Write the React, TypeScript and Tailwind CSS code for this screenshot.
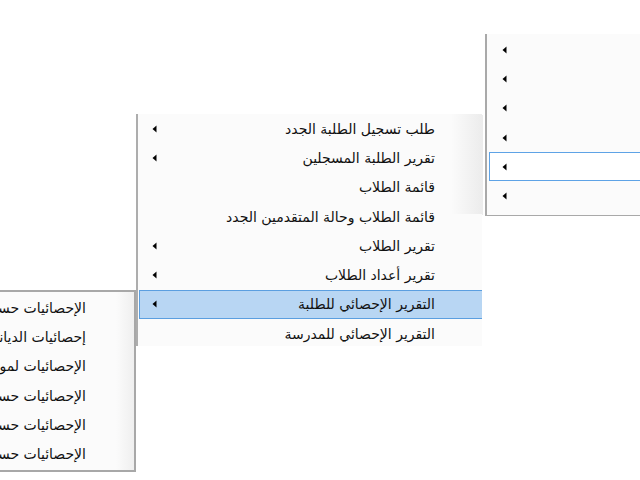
import React from 'react';

type Item = { label: string; sub?: boolean; active?: boolean };

const Arrow = () => (
  <svg width="5" height="8" viewBox="0 0 5 8" className="shrink-0">
    <path d="M4.5 0.5 L0.5 4 L4.5 7.5 Z" fill="#000" />
  </svg>
);

function MenuRow({ item, hover, pr }: { item: Item; hover: 'blue' | 'outline'; pr: string }) {
  const look = item.active
    ? hover === 'blue'
      ? 'bg-[#b8d6f3] border-[#5b9fe0]'
      : 'bg-white border-[#5ea3e6]'
    : 'border-transparent';
  return (
    <div dir="rtl" className={`flex h-[29.3px] items-center justify-between border pl-[12px] ${pr} ${look}`}>
      <span className="whitespace-nowrap text-[14px] leading-none text-[#111]">{item.label}</span>
      {item.sub ? <Arrow /> : <span />}
    </div>
  );
}

export default function App() {
  const reports: Item[] = [
    { label: 'طلب تسجيل الطلبة الجدد', sub: true },
    { label: 'تقرير الطلبة المسجلين', sub: true },
    { label: 'قائمة الطلاب' },
    { label: 'قائمة الطلاب وحالة المتقدمين الجدد' },
    { label: 'تقرير الطلاب', sub: true },
    { label: 'تقرير أعداد الطلاب', sub: true },
    { label: 'التقرير الإحصائي للطلبة', sub: true, active: true },
    { label: 'التقرير الإحصائي للمدرسة' },
  ];

  const stats: Item[] = [
    { label: 'الإحصائيات حسب الجنسية' },
    { label: 'إحصائيات الديانة' },
    { label: 'الإحصائيات لمواليد الطلبة' },
    { label: 'الإحصائيات حسب الصف' },
    { label: 'الإحصائيات حسب الجنس' },
    { label: 'الإحصائيات حسب العمر' },
  ];

  const top: Item[] = [
    { label: 'الطلاب', sub: true },
    { label: 'المعلمون', sub: true },
    { label: 'الموظفون', sub: true },
    { label: 'الشؤون المالية', sub: true },
    { label: 'التقارير', sub: true, active: true },
    { label: 'الإعدادات', sub: true },
  ];

  return (
    <div
      className="relative h-[480px] w-[640px] overflow-hidden bg-white"
      style={{ fontFamily: '"DejaVu Sans", "Noto Sans", sans-serif' }}
    >
      {/* first level menu, runs past the right edge */}
      <div className="absolute left-[485px] top-[34px] h-[182px] w-[220px] border-b border-l-2 border-[#a9a9a9] bg-[#fbfbfb] pl-[2px] pt-[1px]">
        {top.map((it, i) => (
          <MenuRow key={i} item={{ ...it, label: '' }} hover="outline" pr="pr-[40px]" />
        ))}
      </div>
      {/* soft shadow of first level on the second */}
      <div className="absolute left-[452px] top-[115px] h-[100px] w-[31px] bg-gradient-to-r from-transparent to-[#ececec]" />

      {/* second level: reports */}
      <div className="absolute left-[136px] top-[114px] h-[232px] w-[346px] overflow-hidden border-l-2 border-[#adadad] bg-[#fbfbfb]">
        <div className="ml-[1px] mr-[-5px]">
          {reports.map((it, i) => (
            <MenuRow key={i} item={it} hover="blue" pr="pr-[51px]" />
          ))}
        </div>
        <div className="absolute right-0 top-0 h-[100px] w-[31px] bg-gradient-to-r from-transparent to-[#ececec]" />
      </div>

      {/* third level: statistics, runs past the left edge */}
      <div className="absolute left-[-200px] top-[290px] h-[182px] w-[336px] overflow-hidden border-2 border-[#a8a8a8] bg-[#fbfbfb] pt-[1px]">
        <div className="absolute right-0 top-0 h-full w-[18px] bg-gradient-to-r from-transparent to-[#efefef]" />
        <div className="relative mr-[1px]">
          {stats.map((it, i) => (
            <MenuRow key={i} item={it} hover="blue" pr="pr-[46px]" />
          ))}
        </div>
      </div>
    </div>
  );
}
